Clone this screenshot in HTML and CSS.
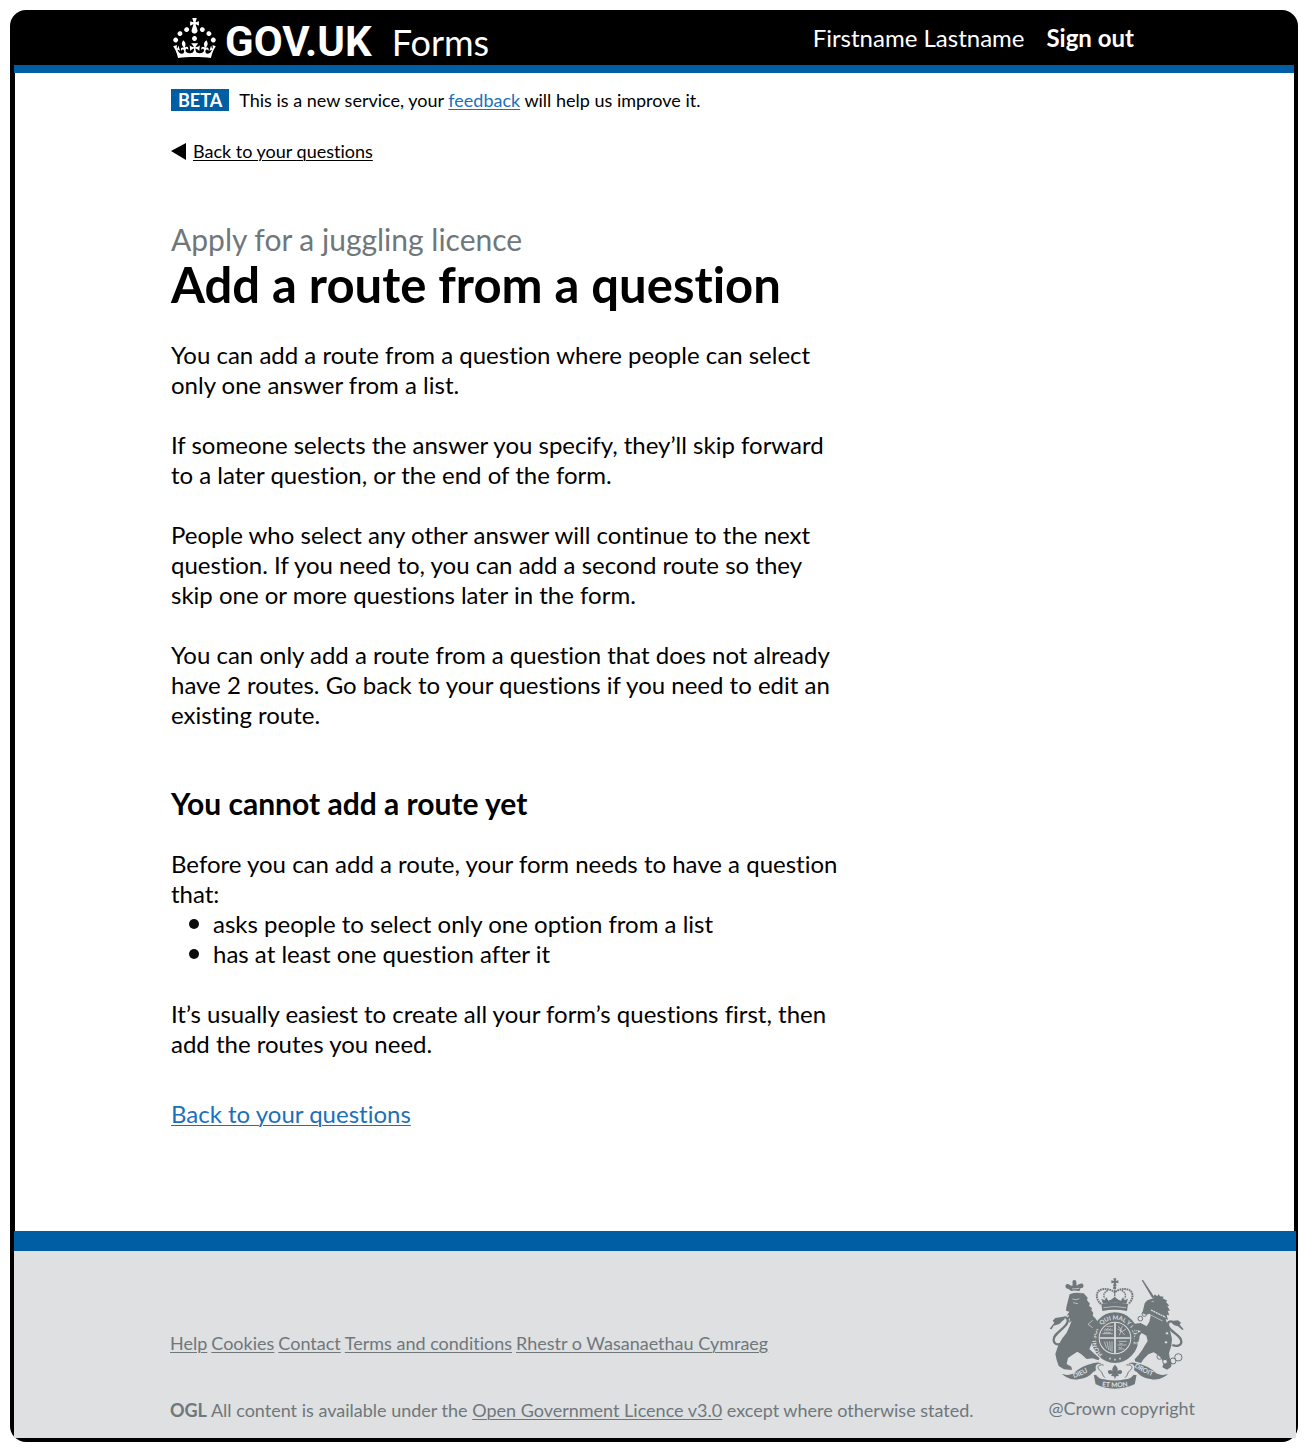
FILE: index.html
```html
<!DOCTYPE html>
<html lang="en">
<head>
<meta charset="utf-8">
<meta name="viewport" content="width=device-width, initial-scale=1">
<title>Add a route from a question – GOV.UK Forms</title>
<link rel="stylesheet" href="styles.css">
</head>
<body>
<div class="frame">
  <header class="header">
    <div class="brand">
      <svg class="crown" viewBox="0 0 32 30" aria-hidden="true"><path fill="currentColor" fill-rule="evenodd" d="M22.6 10.4c-1 .4-2-.1-2.4-1-.4-.9.1-2 1-2.4.9-.4 2 .1 2.4 1s-.1 2-1 2.4m-5.9 6.7c-.9.4-2-.1-2.4-1-.4-.9.1-2 1-2.4.9-.4 2 .1 2.4 1s-.1 2-1 2.4m10.8-3.7c-1 .4-2-.1-2.4-1-.4-.9.1-2 1-2.4.9-.4 2 .1 2.4 1s0 2-1 2.4m3.3 4.8c-1 .4-2-.1-2.4-1-.4-.9.1-2 1-2.4.9-.4 2 .1 2.4 1s-.1 2-1 2.4M17 4.7l2.3 1.2V2.5l-2.3.7-.2-.2.9-3h-3.4l.9 3-.2.2c-.1.1-2.3-.7-2.3-.7v3.4L15 4.7c.1.1.1.2.2.2l-1.3 4c-.1.2-.1.4-.1.6 0 1.1.8 2 1.9 2.2h.7c1-.2 1.9-1.1 1.9-2.1 0-.2 0-.4-.1-.6l-1.3-4c-.1-.2 0-.2.1-.3m-7.6 5.7c.9.4 2-.1 2.4-1 .4-.9-.1-2-1-2.4-.9-.4-2 .1-2.4 1s0 2 1 2.4m-5 3c.9.4 2-.1 2.4-1 .4-.9-.1-2-1-2.4-.9-.4-2 .1-2.4 1s.1 2 1 2.4m-3.2 4.8c.9.4 2-.1 2.4-1 .4-.9-.1-2-1-2.4-.9-.4-2 .1-2.4 1s0 2 1 2.4m14.8 11c4.4 0 8.6.3 12.3.8 1.1-4.5 2.4-7 3.7-8.8l-2.5-.9c.2 1.3.3 1.9 0 2.7-.4-.4-.8-1.1-1.1-2.3l-1.2 4c.7-.5 1.3-.8 2-.9-1.1 2.5-2.6 3.1-3.5 3-1.1-.2-1.7-1.2-1.5-2.1.3-1.2 1.5-1.5 2.1-.1 1.1-2.3-.8-3-2-2.3 1.9-1.9 2.1-3.5.6-5.6-2.1 1.6-2.1 3.2-1.2 5.5-1.2-1.4-3.2-.6-2.5 1.6.9-1.4 2.1-.5 1.9.8-.2 1.1-1.7 2.1-3.5 1.9-2.7-.2-2.9-2.1-2.9-3.6.7-.1 1.9.5 2.9 1.9l.4-4.3c-1.1 1.1-2.1 1.4-3.2 1.4.4-1.2 2.1-3 2.1-3h-5.4s1.7 1.9 2.1 3c-1.1 0-2.1-.2-3.2-1.4l.4 4.3c1-1.4 2.2-2 2.9-1.9-.1 1.5-.2 3.4-2.9 3.6-1.9.2-3.4-.8-3.5-1.9-.2-1.3 1-2.2 1.9-.8.7-2.3-1.2-3-2.5-1.6.9-2.2.9-3.9-1.2-5.5-1.5 2-1.3 3.7.6 5.6-1.2-.7-3.1 0-2 2.3.6-1.4 1.8-1.1 2.1.1.2.9-.3 1.9-1.5 2.1-.9.2-2.4-.5-3.5-3 .6 0 1.2.3 2 .9l-1.2-4c-.3 1.1-.7 1.9-1.1 2.3-.3-.8-.2-1.4 0-2.7l-2.9.9C1.3 23 2.6 25.5 3.7 30c3.7-.5 7.9-.8 12.3-.8"/></svg>
      <div class="wordmark">
        <span class="logotype">GOV.UK</span>
        <span class="product">Forms</span>
      </div>
    </div>
    <nav class="account" aria-label="Account">
      <a class="user" href="#">Firstname Lastname</a>
      <a class="sign-out" href="#">Sign out</a>
    </nav>
  </header>

  <div class="page">
    <div class="phase">
      <strong class="tag">BETA</strong>
      <span>This is a new service, your <a class="link" href="#">feedback</a> will help us improve it.</span>
    </div>
    <a class="back" href="#">
      <svg class="back-arrow" viewBox="0 0 15 17" aria-hidden="true"><path d="M0 8 15 0v17z"/></svg>
      <span>Back to your questions</span>
    </a>

    <main class="content">
      <h1 class="title"><span class="caption">Apply for a juggling licence</span> Add a route from a question</h1>
      <p>You can add a route from a question where people can select only one answer from a list.</p>
      <p>If someone selects the answer you specify, they’ll skip forward to a later question, or the end of the form.</p>
      <p>People who select any other answer will continue to the next question. If you need to, you can add a second route so they skip one or more questions later in the form.</p>
      <p>You can only add a route from a question that does not already have 2 routes. Go back to your questions if you need to edit an existing route.</p>

      <h2 class="subtitle">You cannot add a route yet</h2>
      <p class="lead-in">Before you can add a route, your form needs to have a question that:</p>
      <ul class="bullets">
        <li>asks people to select only one option from a list</li>
        <li>has at least one question after it</li>
      </ul>
      <p>It’s usually easiest to create all your form’s questions first, then add the routes you need.</p>
      <p class="return"><a class="link" href="#">Back to your questions</a></p>
    </main>
  </div>

  <footer class="footer">
    <div class="footer-text">
      <nav class="footer-links" aria-label="Footer">
        <a href="#">Help</a>
        <a href="#">Cookies</a>
        <a href="#">Contact</a>
        <a href="#">Terms and conditions</a>
        <a href="#">Rhestr o Wasanaethau Cymraeg</a>
      </nav>
      <p class="licence"><strong>OGL</strong> All content is available under the <a href="#">Open Government Licence v3.0</a> except where otherwise stated.</p>
    </div>
    <div class="copyright">
      <svg class="crest" viewBox="30 20 408 339" aria-hidden="true">
        <defs>
          <path id="garter" d="M191 252A57 59 0 1 1 265 252"/>
          <path id="ribbon-left" d="M104 323Q136 315 168 290"/>
          <path id="ribbon-right" d="M285 289Q318 313 360 323"/>
          <path id="ribbon-mid" d="M179 346Q227 356 277 346"/>
        </defs>
        <!-- royal crown -->
        <g class="ink">
          <path d="M223 24h9l-2 8 8-2v9l-8-2 3 10h-11l3-10-8 2v-9l8 2z"/>
          <circle cx="227" cy="52" r="5"/>
          <path d="M187 101q40-8 80 0l-3 21q-37-8-74 0z"/>
          <path d="m192 100-5-15 10 5 5-9 6 10 8-3 11-8 11 8 8 3 6-10 5 9 10-5-5 15q-35-6-70 0z"/>
        </g>
        <path class="beads" d="M186 101C166 83 172 59 190 57 206 54 221 60 227 66 233 60 248 54 264 57 282 59 288 83 268 101"/>
        <path class="beads thin" d="M227 58v28M206 60c-12 8-14 15-9 24M248 60c12 8 14 15 9 24"/>
        <path class="cut" d="M193 112q34-7 68 0"/>
        <!-- garter and shield -->
        <ellipse class="ink halo" cx="228" cy="202" rx="73" ry="78"/>
        <text class="motto garter-text"><textPath href="#garter">HONI SOIT QUI MAL Y PENSE</textPath></text>
        <circle class="paper" cx="228" cy="203" r="49"/>
        <circle class="ink" cx="228" cy="203" r="46"/>
        <g class="cut">
          <path d="M228 157v92M182 203h92" class="wide"/>
          <path d="M194 179h28M190 190h31M203 168h19M199 174l4 4 4-4 4 4 4-4M195 185l5 3 5-3 5 3 5-3M236 176l13 8 12-8M238 168l9 11-6 16M250 168l-6 12 13 14M239 213h24M236 224h26M238 236h18M196 214l7 20M204 213l5 26M212 213l2 29M219 213v31M241 218l5 3 5-3M239 230l5 3 5-3"/>
          <path d="M211 265h4M226 268h4M241 265h4" class="wide"/>
        </g>
        <!-- lion -->
        <g class="ink">
          <path d="M92 71Q112 63 134 69l12 13-2 8 9 10-3 6 9 8-2 6 6 8-2 8 8 8 10 14 6 18-12 0-6 12-3 16-6 16-7 16 15 14 16 14-4 6-17-6-18 2-16-14-12-8-15 10-13 9-4 18 14 8 2 10-24-2-16-10-6-18-4-18 8-24 12-22 14-18 8-18 7-18-8 7 3-14-8 4 5-14-7 2 8-12-10-3 1-10z"/>
          <path d="M97 62 87 55a7 7 0 1 1 4-12q5 2 9 4l1-9a6 6 0 1 1 11-1l1 9q5-4 9-5a7 7 0 1 1 3 12l-4 10q-12-4-24-1z"/>
          <path d="m32 175 14-18-5-6 8-8 19-3 9 7-7 5-9 9-17 5-6 11z"/>
        </g>
        <path class="tail" d="M66 146c20-14 27 5 12 21-16 17-36 27-34 43 1 12 10 14 22 11"/>
        <path class="cut" d="m99 56 22-2M100 86l11 2 10-3M102 97l15 3M88 70q20-9 42-2M161 150l-14 12 14 10"/>
        <!-- unicorn -->
        <g class="ink">
          <path d="m308 30 4-1 34 51-6 4z"/>
          <path d="m317 99 8-9 18-6 4-12 8 6 4-7 4 7 11 1-3 5 14 7-4 4 10 11-6 1 8 14-7 0 5 14-8-2 4 16-7-3 6 18 8 20 5 22-2 20-7 22 2 14 6 16-2 12-12 8-14-7 4-14-8-14-10-10-12-7-16 6-14 14-8 12-16 0-3-11 11-12 11-15 8-14 9-14-4-16-14-8-6 8-2 14-8 8-8-6 6-20 16-10-18-4-6 6-3-14 8-10 18-2 18 10 8-14 4-16-3-8-10 3-12-4z"/>
          <path d="m397 157 7-6 13-1 9 7-4 6 12 14-4 2-13-11-11-3z"/>
        </g>
        <path class="tail" d="M408 157c-21-12-28 5-13 21 16 16 33 22 32 37-1 12-15 14-27 9"/>
        <path class="cut wide-gap" d="M336 119l44 22"/>
        <path class="cut" d="m338 94 6-1M331 132l40 20"/>
        <g class="ring">
          <circle cx="316" cy="131" r="7"/><circle cx="304" cy="145" r="7"/><circle class="paper" cx="384" cy="189" r="5"/><circle class="paper" cx="381" cy="216" r="5"/><circle cx="362" cy="259" r="8"/><circle class="paper" cx="378" cy="274" r="7"/><circle cx="402" cy="272" r="9"/><circle cx="418" cy="261" r="11"/>
        </g>
        <!-- ribbon -->
        <g class="ink">
          <path class="halo" d="M60 304q22 14 42 4 24-24 62-32 22-5 28 6-24-2-20 12 3 9-8 12-14 18-42 22-36 8-62-24z"/>
          <path class="halo" d="M396 304q-22 14-42 4-24-24-62-32-22-5-28 6 24-2 20 12-3 9 8 12 14 18 42 22 36 8 62-24z"/>
          <path class="halo" d="m162 313 10-2q7 14 24 14 31 7 62 0 17 0 25-14l12 2-6 30q-29 14-62 14-32 0-59-14z"/>
          <path d="M228 283q14 14 5 22 6-9 14-5 6 7-3 12l-8-2 4 7-9 1-3 9-3-9-9-1 4-7-8 2q-9-5-3-12 8-4 14 5-9-8 5-22z"/>
        </g>
        <path class="ring" d="M194 284c-20-3-21 10-10 17 8 6 4 14 14 21M262 284c20-3 21 10 10 17-8 6-4 14-14 21"/>
        <text class="motto"><textPath href="#ribbon-left">DIEU</textPath></text>
        <text class="motto"><textPath href="#ribbon-right">DROIT</textPath></text>
        <text class="motto"><textPath href="#ribbon-mid" startOffset="50%" text-anchor="middle">ET MON</textPath></text>
      </svg>
      <span>@Crown copyright</span>
    </div>
  </footer>
</div>
</body>
</html>
```
FILE: styles.css
```css
:root {
  --blue: #005ea5;
  --link: #1d70b8;
  --grey: #6f777b;
  --paper: #dee0e2;
  --gutter: 156px;
}

* { box-sizing: border-box; }

body {
  margin: 10px 10px 11px;
  background: #fff;
  color: #0b0c0c;
  font-family: Lato, "Open Sans", sans-serif;
  font-size: 24px;
  line-height: 30px;
  font-variant-ligatures: none;
}

.frame {
  padding: 0 2px 4px 4px;
  border-radius: 16px;
  background: #000;
}

.header {
  display: flex;
  justify-content: space-between;
  align-items: center;
  flex-wrap: wrap;
  min-height: 63px;
  margin-right: 2px;
  padding: 0 160px 0 var(--gutter);
  border-bottom: 8px solid var(--blue);
  color: #fff;
}

.brand { display: flex; align-items: center; padding-left: 3px; }
.crown { width: 43px; height: 40px; }
.wordmark { display: flex; align-items: baseline; gap: 20px; margin-left: 9px; padding-top: 9px; line-height: 44px; }
.logotype { font-family: Roboto, sans-serif; font-size: 42px; font-weight: 700; }
.product { font-size: 36px; }

.account { display: flex; gap: 22px; }
.account a { color: #fff; text-decoration: none; }
.sign-out { font-weight: 700; }

.page {
  margin: 0 2px 0 1px;
  padding: 15px var(--gutter) 102px;
  background: #fff;
}

.phase {
  display: flex;
  align-items: center;
  gap: 10px;
  font-size: 18px;
  line-height: 24px;
  color: #000;
}

.tag {
  padding: 0 7px;
  background: var(--blue);
  color: #fff;
  line-height: 22px;
}

.link { color: var(--link); text-underline-offset: 2px; text-decoration-thickness: 1px; }

.back {
  display: inline-flex;
  align-items: center;
  gap: 7px;
  margin-top: 27px;
  color: #000;
  font-size: 18px;
  line-height: 24px;
  text-decoration: none;
}

.back span { text-decoration: underline 1px; text-underline-offset: 2px; }
.back-arrow { width: 15px; height: 17px; }

.content { max-width: 675px; padding-top: 58px; color: #000; }
.title { margin: 0 0 26px; font-size: 49px; line-height: 60px; }
.caption { display: block; color: var(--grey); font-size: 30px; font-weight: 400; line-height: 30px; }
.content p { margin: 0 0 30px; }
.subtitle { margin: 58px 0 31px; font-size: 30px; line-height: 30px; }
.content .lead-in { margin: 0; }

.bullets { margin: 0 0 30px; padding: 0; list-style: none; }
.bullets li { display: flex; align-items: center; gap: 14px; padding-left: 18px; }
.bullets li::before { content: ""; flex: none; width: 10px; height: 10px; border-radius: 50%; background: #0b0c0c; }

.content .return { margin: 40px 0 0; }

.footer {
  display: flex;
  justify-content: space-between;
  align-items: flex-start;
  gap: 24px;
  padding: 26px 101px 16px var(--gutter);
  border-top: 20px solid var(--blue);
  background: var(--paper);
  color: var(--grey);
  font-size: 18px;
  line-height: 24px;
}

.footer a { color: inherit; text-decoration-thickness: 1px; text-underline-offset: 2px; }
.footer-text { padding-top: 54px; }
.footer-links { display: flex; flex-wrap: wrap; gap: 4px; }
.licence { margin: 43px 0 0; }

.copyright { display: flex; flex-direction: column; gap: 6px; white-space: nowrap; }
.crest { width: 136px; height: 113px; }
.crest .ink { fill: var(--grey); }
.crest .halo { stroke: var(--paper); stroke-width: 4px; }
.crest .cut { fill: none; stroke: var(--paper); stroke-width: 2px; }
.crest .wide { stroke-width: 5px; }
.crest .wide-gap { stroke-width: 4px; stroke-dasharray: 6px 2px; }
.crest .tail { fill: none; stroke: var(--grey); stroke-width: 7px; }
.crest .ring { fill: none; stroke: var(--grey); stroke-width: 3px; }
.crest .beads { fill: none; stroke: var(--grey); stroke-width: 6px; stroke-dasharray: 5px 2px; }
.crest .thin { stroke-width: 4px; }
.crest .paper { fill: var(--paper); }
.crest .motto { fill: var(--paper); font-size: 20px; font-weight: 700; }
.crest .garter-text { font-size: 18px; }

@media (max-width: 1100px) {
  :root { --gutter: 32px; }
  .header { padding-right: 32px; }
  .footer { flex-wrap: wrap; padding-right: 32px; }
}
```
